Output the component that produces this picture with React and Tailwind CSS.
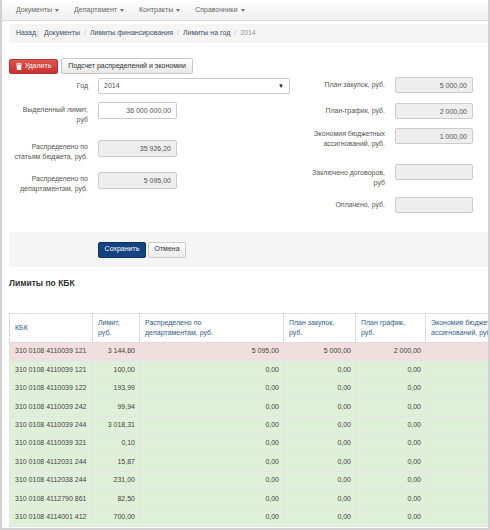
const NAV = ['Документы', 'Департамент', 'Контракты', 'Справочники']

const ROWS = [
  ['310 0108 4110039 121', '3 144,60', '5 095,00', '5 000,00', '2 000,00', true],
  ['310 0108 4110039 121', '100,00', '0,00', '0,00', '0,00'],
  ['310 0108 4110039 122', '193,99', '0,00', '0,00', '0,00'],
  ['310 0108 4110039 242', '99,94', '0,00', '0,00', '0,00'],
  ['310 0108 4110039 244', '3 018,31', '0,00', '0,00', '0,00'],
  ['310 0108 4110039 321', '0,10', '0,00', '0,00', '0,00'],
  ['310 0108 4112031 244', '15,87', '0,00', '0,00', '0,00'],
  ['310 0108 4112038 244', '231,00', '0,00', '0,00', '0,00'],
  ['310 0108 4112790 861', '82,50', '0,00', '0,00', '0,00'],
  ['310 0108 4114001 412', '700,00', '0,00', '0,00', '0,00'],
]

function Caret() {
  return <span className="inline-block ml-[3px] align-middle border-l-[2.5px] border-r-[2.5px] border-t-[3px] border-l-transparent border-r-transparent border-t-[#777]" />
}

function Field({ value, disabled, className = '' }) {
  return (
    <div className={`h-[17px] w-[79px] rounded-[2px] border border-[#ccc] px-[5px] text-right leading-[15px] text-[#555] ${disabled ? 'bg-[#eee]' : 'bg-white'} ${className}`}>
      {value}
    </div>
  )
}

function LeftRow({ label, value, disabled, h, pt = 'pt-[3px]' }) {
  return (
    <div className={`flex items-start gap-[10px] ${h}`}>
      <div className={`w-[79px] text-right leading-[10px] text-[#555] whitespace-nowrap ${pt}`}>{label}</div>
      <Field value={value} disabled={disabled} />
    </div>
  )
}

function RightRow({ label, value, h, pt = 'pt-[3px]' }) {
  return (
    <div className={`flex items-start gap-[10px] ${h}`}>
      <div className={`w-[95px] text-right leading-[10px] text-[#555] whitespace-nowrap ${pt}`}>{label}</div>
      <Field value={value} disabled className="!w-[78px] !h-[16px] leading-[14px]" />
    </div>
  )
}

export default function App() {
  return (
    <div className="w-[490px] h-[530px] overflow-hidden bg-white border-l-2 border-r-2 border-b-2 border-[#d2d2d2] text-[7px] text-[#333]" style={{ fontFamily: '"Liberation Sans", Arial, sans-serif' }}>
      {/* navbar */}
      <div className="h-[21px] flex items-center gap-[15px] pl-[14px] bg-gradient-to-b from-white to-[#efefef] border-b border-[#dcdcdc] text-[#666]">
        {NAV.map((n) => (
          <span key={n} className="flex items-center">{n}<Caret /></span>
        ))}
      </div>

      {/* breadcrumb */}
      <div className="ml-[7px] mt-[3px] h-[19px] flex items-center pl-[7px] bg-[#f5f5f5] text-[#3a4f66]">
        <span>Назад</span>
        <span className="text-[#bbb] ml-[1px] mr-[5px]">|</span>
        <span>Документы</span>
        <span className="text-[#bbb] mx-[4px]">/</span>
        <span>Лимиты финансирования</span>
        <span className="text-[#bbb] mx-[4px]">/</span>
        <span>Лимиты на год</span>
        <span className="text-[#bbb] mx-[4px]">/</span>
        <span className="text-[#999]">2014</span>
      </div>

      {/* actions */}
      <div className="ml-[7px] mt-[15px] flex items-center gap-[3px]">
        <button className="h-[15px] w-[49px] flex items-center justify-center gap-[3px] rounded-[2px] border border-[#b73532] bg-gradient-to-b from-[#e0544f] to-[#c9302c] text-white">
          <svg width="6" height="7" viewBox="0 0 6 7" className="fill-white">
            <rect x="0" y="0.5" width="6" height="1" />
            <rect x="2" y="0" width="2" height="1" />
            <rect x="0.7" y="2" width="4.6" height="5" />
          </svg>
          Удалить
        </button>
        <button className="h-[16px] w-[132px] rounded-[2px] border border-[#c8c8c8] bg-gradient-to-b from-white to-[#e8e8e8] text-[#333]">
          Подсчет распределений и экономии
        </button>
      </div>

      {/* form */}
      <div className="mt-[3px] ml-[7px] flex">
        <div className="w-[281px] pt-[1px] flex flex-col">
          <div className="flex items-start gap-[10px] h-[24px]">
            <div className="w-[79px] text-right leading-[16px] text-[#555]">Год</div>
            <div className="h-[16px] w-[192px] rounded-[2px] border border-[#ccc] bg-white flex items-center justify-between px-[5px] text-[#555]">
              <span>2014</span>
              <span className="text-[6px] text-[#222]">▼</span>
            </div>
          </div>
          <LeftRow label={<>Выделенный лимит,<br />руб</>} value="36 000 000,00" h="h-[38px]" />
          <LeftRow label={<>Распределено по<br />статьям бюджета, руб.</>} value="35 926,20" disabled h="h-[32px]" pt="pt-[2px]" />
          <LeftRow label={<>Распределено по<br />департаментам, руб.</>} value="5 095,00" disabled h="h-[20px]" pt="pt-[2px]" />
        </div>
        <div className="flex flex-col">
          <RightRow label="План закупок, руб." value="5 000,00" h="h-[26px]" />
          <RightRow label="План-график, руб." value="2 000,00" h="h-[25px]" />
          <RightRow label={<>Экономия бюджетных<br />ассигнований, руб.</>} value="1 000,00" h="h-[36px]" pt="pt-[1px]" />
          <RightRow label={<>Заключено договоров,<br />руб</>} value="" h="h-[33px]" pt="pt-[4px]" />
          <RightRow label="Оплачено, руб." value="" h="h-[16px]" />
        </div>
      </div>

      {/* footer buttons */}
      <div className="ml-[7px] mt-[19px] h-[35px] bg-[#f5f5f5] flex items-center pl-[89px] gap-[2px]">
        <button className="h-[16px] w-[48px] rounded-[2px] border border-[#0e3266] bg-[#16427f] text-white">Сохранить</button>
        <button className="h-[16px] w-[38px] rounded-[2px] border border-[#ccc] bg-gradient-to-b from-white to-[#ececec] text-[#333]">Отмена</button>
      </div>

      {/* heading */}
      <div className="ml-[7px] mt-[10px] text-[8.5px] font-bold text-[#333] leading-[12px]">Лимиты по КБК</div>

      {/* table */}
      <div className="ml-[7px] mt-[24px] overflow-hidden">
        <table className="border-collapse w-[560px] table-fixed">
          <colgroup>
            <col className="w-[83px]" />
            <col className="w-[47px]" />
            <col className="w-[144px]" />
            <col className="w-[72px]" />
            <col className="w-[70px]" />
            <col className="w-[144px]" />
          </colgroup>
          <thead>
            <tr className="h-[29px] bg-white text-[#2f5b87]">
              <th className="border border-[#ddd] px-[5px] text-left font-normal leading-[10px]">КБК</th>
              <th className="border border-[#ddd] px-[5px] text-left font-normal leading-[10px]">Лимит,<br />руб.</th>
              <th className="border border-[#ddd] px-[5px] text-left font-normal leading-[10px]">Распределено по<br />департаментам, руб.</th>
              <th className="border border-[#ddd] px-[5px] text-left font-normal leading-[10px]">План закупок,<br />руб.</th>
              <th className="border border-[#ddd] px-[5px] text-left font-normal leading-[10px]">План график,<br />руб.</th>
              <th className="border border-[#ddd] px-[5px] text-left font-normal leading-[10px] whitespace-nowrap">Экономия бюджетных<br />ассигнований, руб.</th>
            </tr>
          </thead>
          <tbody>
            {ROWS.map((r, i) => (
              <tr key={i} className={`h-[18.4px] ${r[5] ? 'bg-[#f2dede]' : 'bg-[#dff0d8]'} text-[#444]`}>
                <td className="border border-[#e4e4e4] px-[5px] whitespace-nowrap">{r[0]}</td>
                <td className="border border-[#e4e4e4] px-[4px] text-right">{r[1]}</td>
                <td className="border border-[#e4e4e4] px-[4px] text-right">{r[2]}</td>
                <td className="border border-[#e4e4e4] px-[4px] text-right">{r[3]}</td>
                <td className="border border-[#e4e4e4] px-[4px] text-right">{r[4]}</td>
                <td className="border border-[#e4e4e4] px-[4px] text-right"></td>
              </tr>
            ))}
          </tbody>
        </table>
      </div>
    </div>
  )
}
